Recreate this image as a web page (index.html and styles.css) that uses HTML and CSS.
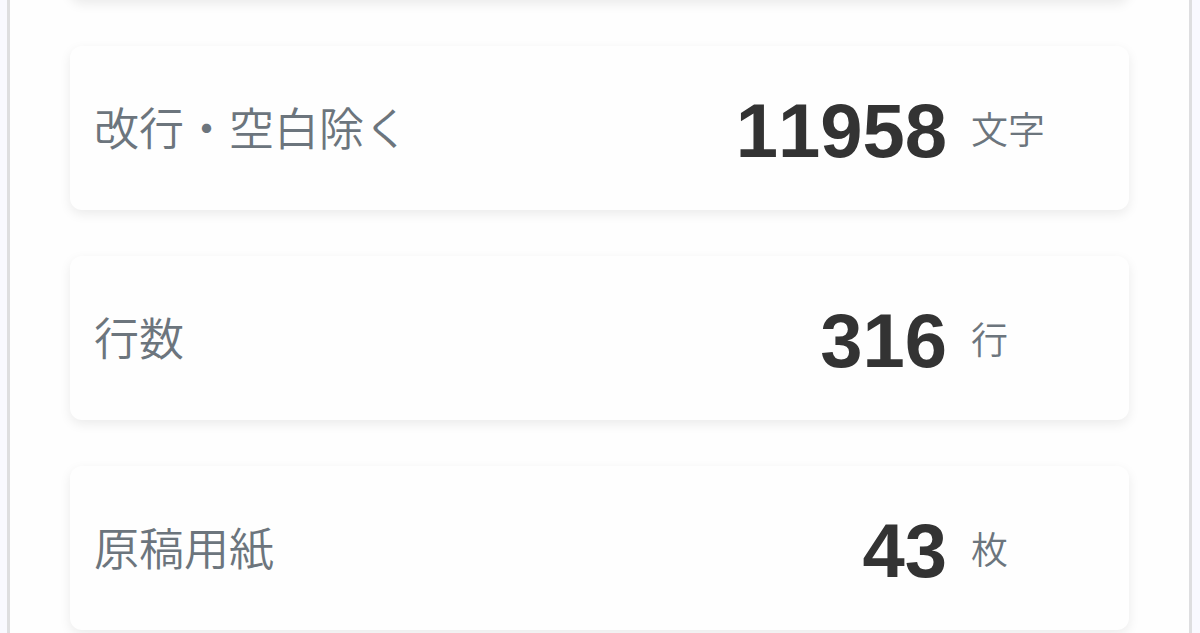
FILE: index.html
```html
<!DOCTYPE html>
<html lang="ja">
<head>
    <meta charset="utf-8">
    <meta name="viewport" content="width=device-width, initial-scale=1">
    <title>文字数カウント</title>
    <link rel="stylesheet" href="styles.css">
</head>
<body>
    <main class="panel">
        <div class="card"></div>
        <dl class="card">
            <dt class="label">改行・空白除く</dt>
            <dd class="number">11958</dd>
            <dd class="unit">文字</dd>
        </dl>
        <dl class="card">
            <dt class="label">行数</dt>
            <dd class="number">316</dd>
            <dd class="unit">行</dd>
        </dl>
        <dl class="card">
            <dt class="label">原稿用紙</dt>
            <dd class="number">43</dd>
            <dd class="unit">枚</dd>
        </dl>
    </main>
</body>
</html>
```

FILE: styles.css
```css
* {
    box-sizing: border-box;
}

body {
    display: flow-root;
    margin: 0;
    padding: 0 8px 0 7px;
    background-color: #f9f9ff;
    overflow: hidden;
}

/* scrolled so that the first card ends at the top of the window */
.panel {
    display: flex;
    flex-direction: column;
    gap: 46px;
    margin-top: -164px;
    padding: 0 60px 3px;
    background-color: #fefefe;
    border: solid #dedee0;
    border-width: 0 3px;
}

.card {
    display: flex;
    align-items: center;
    height: 164px;
    margin: 0;
    padding: 0 24px;
    background-color: #fefefe;
    border-radius: 12px;
    box-shadow: 0 4px 12px rgba(0, 0, 0, 0.08);
}

.label {
    flex: 1;
    padding-bottom: 4px;
    color: #6c757d;
    font-family: "Noto Sans CJK JP", sans-serif;
    font-size: 45px;
    font-weight: 350;
}

.number {
    margin: 0 24px 0 0;
    padding-top: 4px;
    color: #333;
    font-family: "Liberation Sans", Arial, sans-serif;
    font-size: 76px;
    font-weight: bold;
    font-kerning: none;
}

.unit {
    width: 134px;
    margin: 0;
    color: #6c757d;
    font-family: "Noto Sans CJK JP", sans-serif;
    font-size: 37px;
    font-weight: 350;
}
```
